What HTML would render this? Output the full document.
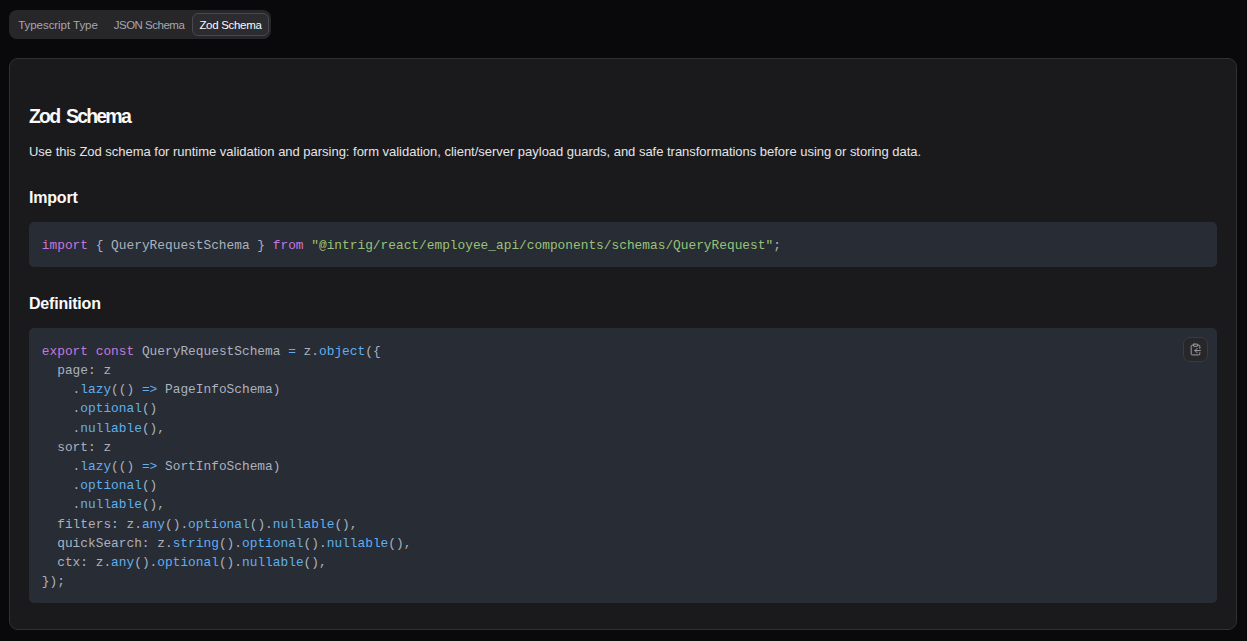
<!DOCTYPE html>
<html>
<head>
<meta charset="utf-8">
<style>
html,body{margin:0;padding:0;}
body{width:1247px;height:641px;background:#09090b;position:relative;overflow:hidden;font-family:"Liberation Sans",sans-serif;}
.abs{position:absolute;}
.tabs{left:9px;top:10px;width:262px;height:29px;border-radius:8px;background:#27272a;box-sizing:border-box;}
.tab{position:absolute;top:3px;height:23px;line-height:25px;font-size:11.5px;color:#a6a6ae;text-align:center;white-space:nowrap;box-sizing:border-box;}
.tab.active{color:#fafafa;background:#2c2c30;border:1px solid #48484e;border-radius:6px;line-height:23px;}
.card{left:9px;top:58px;width:1228px;height:572px;box-sizing:border-box;border:1px solid #313134;border-radius:9px;background:#1a1a1d;}
.h1{left:29px;font-size:19.5px;letter-spacing:-1.8px;word-spacing:3px;font-weight:bold;color:#fafafa;white-space:nowrap;line-height:20px;}
.h2{left:29px;font-size:16px;letter-spacing:-0.2px;font-weight:bold;color:#fafafa;white-space:nowrap;line-height:20px;}
.p{left:29px;font-size:13px;color:#e4e4e7;white-space:nowrap;line-height:18px;}
.code{left:29px;width:1188px;background:#282c34;border-radius:5px;box-sizing:border-box;padding:13.8px 12.8px 0 12.8px;font-family:"Liberation Mono",monospace;font-size:12.83px;line-height:19.2px;color:#abb2bf;white-space:pre;}
.k{color:#c678dd;}
.s{color:#98c379;}
.f{color:#61afef;}
.copy{left:1183px;top:337px;width:25px;height:25px;box-sizing:border-box;border:1px solid #3a3a40;border-radius:7px;background:#27272a;}
.copy svg{position:absolute;left:5px;top:4.8px;}
</style>
</head>
<body>
<div class="abs tabs">
  <div class="tab" style="left:2px;width:94px;letter-spacing:-0.05px;">Typescript Type</div>
  <div class="tab" style="left:97px;width:86px;letter-spacing:-0.5px;">JSON Schema</div>
  <div class="tab active" style="left:183px;width:77px;letter-spacing:-0.3px;">Zod Schema</div>
</div>
<div class="abs card"></div>
<div class="abs h1" style="top:106px;">Zod Schema</div>
<div class="abs p" style="top:143px;letter-spacing:-0.02px;">Use this Zod schema for runtime validation and parsing: form validation, client/server payload guards, and safe transformations before using or storing data.</div>
<div class="abs h2" style="top:188px;">Import</div>
<div class="abs code" style="top:222px;height:45px;"><span class="k">import</span> { QueryRequestSchema } <span class="k">from</span> <span class="s">"@intrig/react/employee_api/components/schemas/QueryRequest"</span>;</div>
<div class="abs h2" style="top:294px;">Definition</div>
<div class="abs code" style="top:328px;height:275px;"><span class="k">export</span> <span class="k">const</span> QueryRequestSchema <span class="f">=</span> z.<span class="f">object</span>({
  page: z
    .<span class="f">lazy</span>(() <span class="f">=&gt;</span> PageInfoSchema)
    .<span class="f">optional</span>()
    .<span class="f">nullable</span>(),
  sort: z
    .<span class="f">lazy</span>(() <span class="f">=&gt;</span> SortInfoSchema)
    .<span class="f">optional</span>()
    .<span class="f">nullable</span>(),
  filters: z.<span class="f">any</span>().<span class="f">optional</span>().<span class="f">nullable</span>(),
  quickSearch: z.<span class="f">string</span>().<span class="f">optional</span>().<span class="f">nullable</span>(),
  ctx: z.<span class="f">any</span>().<span class="f">optional</span>().<span class="f">nullable</span>(),
});</div>
<div class="abs copy"><svg width="13" height="13" viewBox="0 0 24 24" fill="none" stroke="#a1a1aa" stroke-width="1.8" stroke-linecap="round" stroke-linejoin="round"><rect x="8" y="2" width="8" height="4" rx="1" ry="1"/><path d="M8 4H6a2 2 0 0 0-2 2v14a2 2 0 0 0 2 2h12a2 2 0 0 0 2-2v-2"/><path d="M16 4h2a2 2 0 0 1 2 2v4"/><path d="M21 14H11"/><path d="m15 10-4 4 4 4"/></svg></div>
</body>
</html>
